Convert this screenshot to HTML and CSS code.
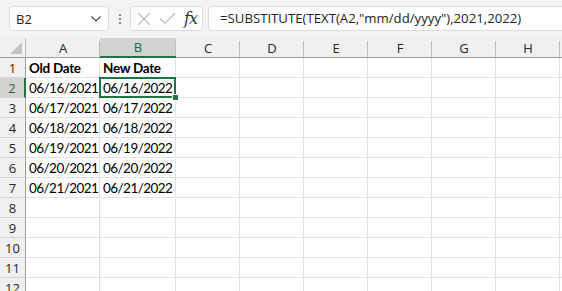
FILE: index.html
```html
<!doctype html>
<html lang="en">
<head>
    <meta charset="UTF-8">
    <title>SUBSTITUTE date year</title>
    <link rel="stylesheet" href="styles.css">
</head>
<body>
<div class="toolbar">
    <div class="name-box">
        <span>B2</span>
        <svg class="chev" width="12" height="8" viewBox="0 0 12 8"><path d="M1.5 1.5 L6 6 L10.5 1.5" fill="none" stroke="#444" stroke-width="1.2"/></svg>
    </div>
    <div class="grip"><i></i><i></i><i></i></div>
    <div class="fx-box">
        <svg width="14" height="14" viewBox="0 0 14 14"><path d="M1 1 L13 13 M13 1 L1 13" stroke="#bdbdbd" stroke-width="1.2"/></svg>
        <svg width="17" height="13" viewBox="0 0 17 13"><path d="M1 6.5 L6 11.5 L16 1" fill="none" stroke="#bdbdbd" stroke-width="1.2"/></svg>
        <span class="fx">fx</span>
    </div>
    <div class="formula">=SUBSTITUTE(TEXT(A2,"mm/dd/yyyy"),2021,2022)</div>
</div>

<div class="sheet">
    <div class="hd corner"><b class="tri"></b></div>
    <div class="hd col">A</div>
    <div class="hd col sel">B</div>
    <div class="hd col">C</div>
    <div class="hd col">D</div>
    <div class="hd col">E</div>
    <div class="hd col">F</div>
    <div class="hd col">G</div>
    <div class="hd col">H</div>
    <div class="hd col"></div>

    <div class="hd row">1</div>
    <div class="c bold">Old Date</div><div class="c bold">New Date</div>
    <div class="c"></div><div class="c"></div><div class="c"></div><div class="c"></div><div class="c"></div><div class="c"></div><div class="c"></div>

    <div class="hd row sel">2</div>
    <div class="c r">06/16/2021</div><div class="c active">06/16/2022<b class="handle"></b></div>
    <div class="c"></div><div class="c"></div><div class="c"></div><div class="c"></div><div class="c"></div><div class="c"></div><div class="c"></div>

    <div class="hd row">3</div>
    <div class="c r">06/17/2021</div><div class="c">06/17/2022</div>
    <div class="c"></div><div class="c"></div><div class="c"></div><div class="c"></div><div class="c"></div><div class="c"></div><div class="c"></div>

    <div class="hd row">4</div>
    <div class="c r">06/18/2021</div><div class="c">06/18/2022</div>
    <div class="c"></div><div class="c"></div><div class="c"></div><div class="c"></div><div class="c"></div><div class="c"></div><div class="c"></div>

    <div class="hd row">5</div>
    <div class="c r">06/19/2021</div><div class="c">06/19/2022</div>
    <div class="c"></div><div class="c"></div><div class="c"></div><div class="c"></div><div class="c"></div><div class="c"></div><div class="c"></div>

    <div class="hd row">6</div>
    <div class="c r">06/20/2021</div><div class="c">06/20/2022</div>
    <div class="c"></div><div class="c"></div><div class="c"></div><div class="c"></div><div class="c"></div><div class="c"></div><div class="c"></div>

    <div class="hd row">7</div>
    <div class="c r">06/21/2021</div><div class="c">06/21/2022</div>
    <div class="c"></div><div class="c"></div><div class="c"></div><div class="c"></div><div class="c"></div><div class="c"></div><div class="c"></div>

    <div class="hd row">8</div>
    <div class="c"></div><div class="c"></div><div class="c"></div><div class="c"></div><div class="c"></div><div class="c"></div><div class="c"></div><div class="c"></div><div class="c"></div>

    <div class="hd row">9</div>
    <div class="c"></div><div class="c"></div><div class="c"></div><div class="c"></div><div class="c"></div><div class="c"></div><div class="c"></div><div class="c"></div><div class="c"></div>

    <div class="hd row">10</div>
    <div class="c"></div><div class="c"></div><div class="c"></div><div class="c"></div><div class="c"></div><div class="c"></div><div class="c"></div><div class="c"></div><div class="c"></div>

    <div class="hd row">11</div>
    <div class="c"></div><div class="c"></div><div class="c"></div><div class="c"></div><div class="c"></div><div class="c"></div><div class="c"></div><div class="c"></div><div class="c"></div>

    <div class="hd row">12</div>
    <div class="c"></div><div class="c"></div><div class="c"></div><div class="c"></div><div class="c"></div><div class="c"></div><div class="c"></div><div class="c"></div><div class="c"></div>
</div>
</body>
</html>
```

FILE: styles.css
```css
body {
    margin: 0;
    background-color: #fff;
    font-family: "Open Sans", "Noto Sans", sans-serif;
    overflow: hidden;
}

.toolbar {
    height: 38px;
    background-color: #f3f3f3;
    display: flex;
    align-items: flex-start;
    padding-top: 6px;
    box-sizing: border-box;
}

.name-box {
    margin-left: 9px;
    width: 100px;
    height: 25px;
    box-sizing: border-box;
    background-color: #fff;
    border: 1px solid #dcdcdc;
    border-radius: 4px;
    display: flex;
    align-items: center;
    justify-content: space-between;
    padding: 0 6px 0 6px;
    font-size: 13px;
    color: #222;
}

.grip {
    width: 21px;
    height: 25px;
    display: flex;
    flex-direction: column;
    align-items: center;
    justify-content: center;
    gap: 2px;
}

.grip i {
    width: 2px;
    height: 2px;
    background-color: #8a8a8a;
}

.fx-box {
    width: 73px;
    height: 25px;
    box-sizing: border-box;
    background-color: #fff;
    border: 1px solid #dcdcdc;
    border-radius: 4px;
    display: flex;
    align-items: center;
    padding-left: 6px;
    gap: 8px;
}

.fx {
    font-family: "DejaVu Serif", "Liberation Serif", serif;
    font-style: italic;
    font-size: 16px;
    color: #333;
    letter-spacing: -1px;
}

.formula {
    margin-left: 5px;
    flex: 1;
    height: 25px;
    box-sizing: border-box;
    background-color: #fff;
    border: 1px solid #dcdcdc;
    border-right: none;
    border-radius: 4px 0 0 4px;
    padding-left: 11px;
    font-size: 13.2px;
    line-height: 23px;
    color: #222;
    white-space: nowrap;
}

.sheet {
    display: grid;
    grid-template-columns: 26px 74px 76px repeat(6, 64px) 40px;
    grid-auto-rows: 20px;
}

.hd {
    background-color: #f0f0f0;
    color: #262626;
    font-size: 13px;
    display: flex;
    align-items: center;
    justify-content: center;
    box-sizing: border-box;
}

.col {
    border-bottom: 1px solid #9f9f9f;
    position: relative;
}

.col::after {
    content: "";
    position: absolute;
    right: 0;
    top: 3px;
    bottom: 0;
    width: 1px;
    background-color: #bdbdbd;
}

.col.sel {
    background-color: #d2d2d2;
    color: #1a6a3f;
    border-bottom: 2px solid #217346;
}

.corner {
    border-bottom: 1px solid #9f9f9f;
    border-right: 1px solid #bdbdbd;
    position: relative;
}

.tri {
    position: absolute;
    right: 3px;
    bottom: 3px;
    width: 0;
    height: 0;
    border-left: 12px solid transparent;
    border-bottom: 12px solid #c3c3c3;
}

.row {
    border-right: 1px solid #9f9f9f;
    border-bottom: 1px solid #d4d4d4;
}

.row.sel {
    background-color: #d2d2d2;
    color: #1a6a3f;
    border-right: 2px solid #217346;
}

.c {
    border-right: 1px solid #e1e1e1;
    border-bottom: 1px solid #e1e1e1;
    box-sizing: border-box;
    font-family: "Lato", "Liberation Sans", sans-serif;
    font-size: 13.5px;
    letter-spacing: -0.55px;
    color: #000;
    padding: 0 3px;
    line-height: 20px;
    white-space: nowrap;
    position: relative;
}

.c.r {
    text-align: right;
}

.c.bold {
    font-weight: bold;
    letter-spacing: -0.3px;
}

.c.active::before {
    content: "";
    position: absolute;
    left: -1px;
    top: -1px;
    right: -1px;
    bottom: -1px;
    border: 2px solid #217346;
}

.handle {
    position: absolute;
    right: -4px;
    bottom: -4px;
    width: 5px;
    height: 5px;
    background-color: #217346;
    border: 1px solid #fff;
    z-index: 2;
}
```
